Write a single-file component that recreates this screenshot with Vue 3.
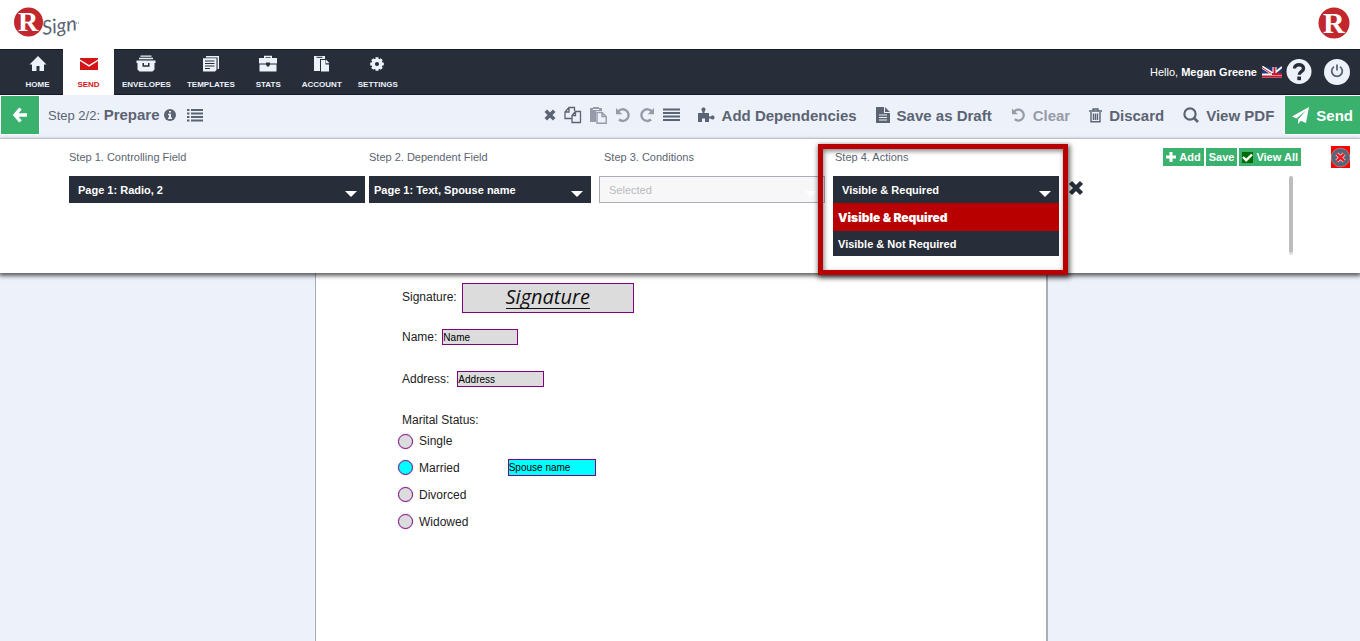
<script setup>
import { ref } from 'vue'

const nav = ['HOME', 'SEND', 'ENVELOPES', 'TEMPLATES', 'STATS', 'ACCOUNT', 'SETTINGS']
const active = ref('SEND')
const controlling = ref('Page 1: Radio, 2')
const dependent = ref('Page 1: Text, Spouse name')
const actions = ['Visible & Required', 'Visible & Not Required']
const action = ref(actions[0])
const marital = ref('Married')
const statuses = ['Single', 'Married', 'Divorced', 'Widowed']
</script>

<template>
  <div class="page">
    <header class="brand">
      <a href="#" class="logo" aria-label="RSign">
        <svg width="68" height="38" viewBox="0 0 68 38">
          <circle cx="14.500" cy="15" r="14.500" fill="#c1272d" />
          <text x="4" y="24" class="mono-r" font-size="28">R</text>
          <text x="29" y="28" class="script" transform="rotate(-8 29 28)">Sign</text>
          <path d="M62 16h1M64 16h1" stroke="#5b6472" />
        </svg>
      </a>
      <svg width="32" height="32" viewBox="0 0 32 32">
        <circle cx="16" cy="16" r="15.500" fill="#c1272d" />
        <text x="5" y="26" class="mono-r" font-size="30">R</text>
      </svg>
    </header>

    <nav class="nav">
      <a v-for="n in nav" :key="n" href="#" class="nav-item" :class="{ on: n === active }" @click.prevent="active = n">
        <svg width="20" height="18" viewBox="0 0 20 18" fill="currentColor">
          <path v-if="n === 'HOME'" d="M10 1L18.500 9.500H16V16h-4.500v-5h-3v5H4V9.500H1.500z" />
          <g v-else-if="n === 'SEND'">
            <path d="M1 3h18v1.500L10 10 1 4.500z" />
            <path d="M1 6l9 5.800L19 6V15H1z" />
          </g>
          <g v-else-if="n === 'ENVELOPES'">
            <path d="M4.500 .5h11v1.300h-11zM3 2.800h14v1.500H3z" />
            <path fill-rule="evenodd" d="M.5 5.500h19V8h-1v6.500l-2 2h-13l-2-2V8h-1zM6.500 8v3.800h7V8H12v2.300H8V8z" />
          </g>
          <g v-else-if="n === 'TEMPLATES'">
            <path d="M5 1h13v13h-1.400V2.400H5z" />
            <path fill-rule="evenodd" d="M2 3.200h13.500V15L14 16.500H2zM4 5.500v1h9.500v-1zM4 8v1h9.500V8zM4 10.500v1h9.500v-1zM4 13v1h5v-1z" />
          </g>
          <g v-else-if="n === 'STATS'">
            <path fill-rule="evenodd" d="M6 3V.8h8V3h5v5.500h-7v-1H8v1H1V3zM7.500 2.200V3h5v-.8z" />
            <path d="M1.500 9.500H8l1 2h2l1-2h6.500v7h-17z" />
          </g>
          <g v-else-if="n === 'ACCOUNT'">
            <path d="M2 1h11v3H8v12H2z" />
            <path d="M4.500 2.300h6" stroke="#272e39" />
            <path d="M9 5h4.500v4.500H17V16.500H9z" />
            <path d="M14 4.500l3.500 3.800H14z" />
          </g>
          <g v-else transform="translate(-1 0)">
            <circle cx="10" cy="9" r="3.800" fill="none" stroke="currentColor" stroke-width="3.400" />
            <path d="M10 2.200V5M10 13v2.800M3.200 9H6M14 9h2.800M5.200 4.200l1.900 1.900M12.900 11.900l1.900 1.900M5.200 13.800l1.900-1.900M12.900 6.100l1.900-1.900" stroke="currentColor" stroke-width="3" />
          </g>
        </svg>
        <span>{{ n }}</span>
      </a>
      <div class="user">
        <span>Hello, <b>Megan Greene</b></span>
        <svg class="flag" width="20" height="13" viewBox="0 0 20 13">
          <path fill="#1d3a78" d="M0 1h20v11H0z" />
          <path d="M0 1l11 7" stroke="#fff" stroke-width="3" />
          <path d="M20 1l-6 5" stroke="#fff" stroke-width="2" />
          <path d="M0 1.500l10 6.500" stroke="#d0142c" />
          <path d="M12.500 1v8M0 9.500h20" stroke="#fff" stroke-width="4" />
          <path d="M12.500 1v8" stroke="#d0142c" stroke-width="2" />
          <path d="M10 8h10" stroke="#d0142c" stroke-width="2" />
          <path d="M0 10.500h20" stroke="#d0142c" stroke-width="2" />
        </svg>
        <a href="#" class="round" aria-label="Help">
          <svg width="26" height="26" viewBox="0 0 26 26"><circle cx="13" cy="12.500" r="12.500" fill="#edf1fa" /><path d="M8.500 9.500c0-5 9-5 9 0 0 3.200-4.300 3-4.300 6.200" fill="none" stroke="#272e39" stroke-width="3.400" /><path d="M11.300 17.500h3.700v3.700h-3.700z" fill="#272e39" /></svg>
        </a>
        <a href="#" class="round power" aria-label="Log out">
          <svg width="26" height="26" viewBox="0 0 26 26"><circle cx="13" cy="13" r="13" fill="#edf1fa" /><path d="M10 7.700a5.300 5.300 0 1 0 6 0M13 5.500v6" fill="none" stroke="#5b6472" stroke-width="1.800" /></svg>
        </a>
      </div>
    </nav>

    <div class="toolbar">
      <button class="green back" aria-label="Back">
        <svg width="14" height="16" viewBox="0 0 14 16"><path d="M7.500 1.500L2 8l5.500 6.500M2.500 8H14" fill="none" stroke="#fff" stroke-width="3.400" /></svg>
      </button>
      <h1>Step 2/2: <b>Prepare</b></h1>
      <svg class="info" width="12" height="12" viewBox="0 0 12 12"><circle cx="6" cy="6" r="6" fill="#5b6472" /><path d="M5 2h2v1.600H5zM4 4.800h3v3.600h1V10H4V8.400h1V6.200H4z" fill="#edf1fa" /></svg>
      <button class="icon" aria-label="Steps">
        <svg width="16" height="14" viewBox="0 0 16 14"><path d="M0 2h2.500M4 2h12M0 5.500h2.500M4 5.500h12M0 9h2.500M4 9h12M0 12.500h2.500M4 12.500h12" stroke="#5b6472" stroke-width="2" /></svg>
      </button>

      <div class="edit">
        <button class="icon" aria-label="Delete"><svg width="12" height="12" viewBox="0 0 12 12"><path d="M1.800 1.800l8.400 8.400M10.200 1.800l-8.400 8.400" stroke="#5b6472" stroke-width="3.600" /></svg></button>
        <button class="icon" aria-label="Copy"><svg width="18" height="18" viewBox="0 0 18 18"><g fill="none" stroke="#5b6472" stroke-width="1.300"><path d="M8 12.500H1V6l4-4.500h5.500V5M5 1.500V6H1" /><path d="M8 9.500L11.500 5.500h5v11H8zM11.500 5.500v4H8" /></g></svg></button>
        <button class="icon dim" aria-label="Paste"><svg width="17" height="17" viewBox="0 0 17 17"><path d="M0 1h3V0h6v1h3v3H6v11H0z" fill="#5b6472" /><path d="M3 2.500h6" stroke="#edf1fa" /><path d="M7 5.500h5l4.200 4v6.800H7zM12 5.500v4h4" fill="none" stroke="#5b6472" stroke-width="1.400" /></svg></button>
        <button class="icon dim" aria-label="Undo"><svg width="16" height="16" viewBox="0 0 16 16"><path d="M3.200 4.600A5.800 5.800 0 1 1 4 12.500" fill="none" stroke="#5b6472" stroke-width="2.400" /><path d="M1 1v6.300h6.300z" fill="#5b6472" /></svg></button>
        <button class="icon dim" aria-label="Redo"><svg width="16" height="16" viewBox="0 0 16 16"><path d="M12.800 4.600A5.800 5.800 0 1 0 12 12.500" fill="none" stroke="#5b6472" stroke-width="2.400" /><path d="M15 1v6.300H8.700z" fill="#5b6472" /></svg></button>
        <button class="icon" aria-label="Align"><svg width="17" height="14" viewBox="0 0 17 14"><path d="M0 1.500h17M0 5h17M0 8.500h17M0 12h17" stroke="#5b6472" stroke-width="2" /></svg></button>
      </div>

      <button class="act"><svg width="18" height="16" viewBox="0 0 18 16"><path d="M1 6h4.500C6 4.500 4.500 4 4.500 2.500S5.500.5 6.500.5 8.500 1 8.500 2.500 7 4.500 7.500 6H12v3.500h2C14.500 8 17.500 8 17.500 10.500S14.500 13 14 11.500h-2V15H8v-3.500H5V15H1z" fill="#5b6472" /></svg>Add Dependencies</button>
      <button class="act"><svg width="14" height="16" viewBox="0 0 14 16"><path d="M0 0h8v6h6v10H0zM9 0l5 5H9z" fill="#5b6472" /><path d="M3 8h8M3 10.500h8M3 13h8" stroke="#edf1fa" stroke-width="1.200" /></svg>Save as Draft</button>
      <button class="act dim"><svg width="15" height="16" viewBox="0 0 16 16"><path d="M3.200 4.600A5.800 5.800 0 1 1 4 12.500" fill="none" stroke="#5b6472" stroke-width="2.400" /><path d="M1 1v6.300h6.300z" fill="#5b6472" /></svg>Clear</button>
      <button class="act"><svg width="13" height="15" viewBox="0 0 13 15"><path d="M0 3h13M4.200 3V1h4.600v2" fill="none" stroke="#5b6472" stroke-width="1.700" /><path d="M2 4v9.800h9V4M4.500 5.500V12M6.500 5.500V12M8.500 5.500V12" fill="none" stroke="#5b6472" stroke-width="1.400" /></svg>Discard</button>
      <button class="act"><svg width="16" height="16" viewBox="0 0 16 16"><circle cx="7" cy="7" r="5.600" fill="none" stroke="#5b6472" stroke-width="2.200" /><path d="M11 11l4 4" stroke="#5b6472" stroke-width="2.600" /></svg>View PDF</button>
      <button class="green send"><svg width="17" height="17" viewBox="0 0 17 17"><path d="M17 0L0 9.500l4.500 2L14 3.500 6 12.500V17l2.800-3.200L14 16z" fill="#fff" /></svg>Send</button>
    </div>

    <section class="panel">
      <div class="steps">
        <div class="step">
          <label for="s1">Step 1. Controlling Field</label>
          <div class="pick">
            <select id="s1" v-model="controlling"><option>Page 1: Radio, 2</option></select>
            <svg class="caret" width="12" height="6" viewBox="0 0 12 6"><path d="M0 0h12L6 6z" /></svg>
          </div>
        </div>
        <div class="step second">
          <label for="s2">Step 2. Dependent Field</label>
          <div class="pick">
            <select id="s2" v-model="dependent"><option>Page 1: Text, Spouse name</option></select>
            <svg class="caret" width="12" height="6" viewBox="0 0 12 6"><path d="M0 0h12L6 6z" /></svg>
          </div>
        </div>
        <div class="step third">
          <label for="s3">Step 3. Conditions</label>
          <div class="pick">
            <select id="s3" disabled><option>Selected</option></select>
            <svg class="caret" width="12" height="6" viewBox="0 0 12 6"><path d="M0 0h12L6 6z" /></svg>
          </div>
        </div>
        <div class="step fourth">
          <label for="s4">Step 4. Actions</label>
          <div class="pick">
            <select id="s4" v-model="action"><option v-for="a in actions" :key="a">{{ a }}</option></select>
            <svg class="caret" width="12" height="6" viewBox="0 0 12 6"><path d="M0 0h12L6 6z" /></svg>
          </div>
          <ul class="list">
            <li v-for="a in actions" :key="a"><button :class="{ hot: a === action }" @click="action = a">{{ a }}</button></li>
          </ul>
          <div class="callout"></div>
        </div>
      </div>
      <button class="icon remove" aria-label="Remove step"><svg width="16" height="16" viewBox="0 0 16 16"><path d="M2.500 2.500l11 11M13.500 2.500l-11 11" stroke="#272e39" stroke-width="4.400" /></svg></button>
      <div class="side">
        <div class="buttons">
          <button class="green"><svg width="10" height="10" viewBox="0 0 10 10"><path d="M5 0v10M0 5h10" stroke="#fff" stroke-width="3" /></svg>Add</button>
          <button class="green">Save</button>
          <button class="green"><svg width="11" height="11" viewBox="0 0 11 11"><path fill="#006b00" d="M0 0h11v11H0z" /><path d="M1 5l3.200 3.200L10 2.500" fill="none" stroke="#fff" stroke-width="2.400" /></svg>View All</button>
        </div>
        <div class="track"></div>
      </div>
      <button class="icon close" aria-label="Close"><svg width="19" height="22" viewBox="0 0 19 22"><path fill="#f00" d="M0 0h19v22H0z" /><circle cx="9.500" cy="11.500" r="9.300" fill="#5b6472" stroke="#aab" stroke-width=".6" /><path d="M5.800 7.800l7.400 7.400M13.200 7.800l-7.400 7.400" stroke="#dde" stroke-width="4" /><path d="M5.800 7.800l7.400 7.400M13.200 7.800l-7.400 7.400" stroke="#f01820" stroke-width="2.600" /></svg></button>
    </section>

    <main class="canvas">
      <form class="doc" @submit.prevent>
        <div class="row sign-row">
          <span>Signature:</span>
          <button type="button" class="signature" aria-label="Signature field"><span>Signature</span></button>
        </div>
        <div class="row">
          <label for="name">Name:</label>
          <input id="name" class="field name" value="Name" readonly />
        </div>
        <div class="row address-row">
          <label for="address">Address:</label>
          <input id="address" class="field address" value="Address" readonly />
        </div>
        <fieldset>
          <legend>Marital Status:</legend>
          <div v-for="s in statuses" :key="s" class="status">
            <input :id="s" v-model="marital" type="radio" name="marital" :value="s" />
            <label :for="s">{{ s }}</label>
            <input v-if="s === 'Married'" class="field spouse" value="Spouse name" aria-label="Spouse name" readonly />
          </div>
        </fieldset>
      </form>
    </main>
  </div>
</template>

<style>
body { margin: 0; }
</style>

<style scoped>
* { box-sizing: border-box; }
.page { min-height: 100vh; display: flex; flex-direction: column; overflow: hidden; background: #edf1fa; font-family: "Liberation Sans", Arial, sans-serif; color: #5b6472; }
button { font-family: inherit; border: 0; cursor: pointer; }
svg { display: block; flex: none; }
a { text-decoration: none; }
.brand { height: 49px; padding: 7px 10px 0 14px; display: flex; justify-content: space-between; background: #fff; }
.mono-r { font-family: "Liberation Serif", serif; font-weight: bold; fill: #fff; }
.script { font: italic 20px Lato, sans-serif; fill: #5b6472; }

.nav { height: 46px; padding-left: 12px; display: flex; background: #272e39; border-top: 1px solid #151b26; border-bottom: 1px solid #151b26; }
.nav-item { min-width: 51px; margin: -1px 0; padding: 6px 8px 0; display: flex; flex-direction: column; align-items: center; gap: 7px; color: #edf1fa; font-size: 8px; line-height: 10px; font-weight: bold; }
.nav-item.on { background: #fff; color: #d41515; }
.user { margin-left: auto; padding-right: 10px; display: flex; align-items: center; color: #fff; font-size: 11px; }
.flag { margin: 0 4px 0 5px; }
.power { margin-left: 12px; }

.toolbar { height: 44px; display: flex; align-items: center; padding: 0 0 3px 1px; border-bottom: 1px solid #dcdfec; }
.green { background: #3bb16e; color: #fff; font-weight: bold; }
.back { width: 38px; height: 38px; padding: 0; display: flex; align-items: center; justify-content: center; box-shadow: 0 0 0 1px #fff; }
h1 { margin: 0 0 0 9px; font-size: 13px; font-weight: normal; line-height: 18px; }
h1 b { font-size: 15px; }
.info { margin: 0 11px 0 4px; }
.icon { padding: 0; background: none; }
.dim { opacity: .6; }
.edit { margin-left: auto; margin-right: 17px; display: flex; align-items: center; gap: 8px; }
.act { padding: 0; margin-right: 19px; display: flex; align-items: center; gap: 7px; background: none; color: #5b6472; font-size: 15px; font-weight: bold; white-space: nowrap; }
.send { height: 38px; margin-left: -8px; padding: 0 7px; display: flex; align-items: center; gap: 7px; font-size: 15px; box-shadow: 0 0 0 1px #fff; }

.panel { position: relative; z-index: 1; min-height: 134px; padding: 7px 10px 0 69px; display: flex; background: #fff; box-shadow: 0 2px 4px 1px rgba(0, 0, 0, .6); font-size: 11px; }
.steps { flex: 1; display: grid; grid-template-columns: 300fr 230fr 234fr 226fr; }
.step { padding-right: 4px; min-width: 0; }
.step > label { display: block; height: 30px; line-height: 22px; }
.second, .third { padding-right: 8px; }
.third > label { padding-left: 5px; }
.fourth { position: relative; padding-right: 0; }
.fourth > label { padding-left: 2px; }
.pick { position: relative; }
select { display: block; width: 100%; height: 27px; padding: 0 24px 0 9px; appearance: none; border: 0; border-radius: 0; background: #272e39; color: #fff; font: bold 11px "Liberation Sans", Arial, sans-serif; }
.second select { padding-left: 5px; }
select:disabled { opacity: 1; border: 1px solid #a8acb3; background: #f7f7f7; color: #b8bbc0; font-weight: normal; }
.caret { position: absolute; right: 8px; bottom: 6px; fill: #fff; pointer-events: none; }
.list { margin: 0; padding: 0; list-style: none; }
.list button { display: block; width: 100%; height: 25px; padding: 0 5px; text-align: left; background: #272e39; color: #fff; font-size: 11px; font-weight: bold; }
.list button.hot { height: 28px; background: #b90000; font-family: Inter, sans-serif; font-size: 12px; font-weight: 900; }
.callout { position: absolute; left: -15px; right: -9px; top: -2px; height: 131px; border: 5px solid #b90000; box-shadow: 1px 2px 5px 1px rgba(0, 0, 0, .6), inset 1px 2px 5px rgba(0, 0, 0, .5); pointer-events: none; }
.remove { align-self: flex-start; margin: 34px 0 0 9px; }
.side { width: 217px; padding: 2px 0 0; display: flex; flex-direction: column; align-items: flex-end; }
.buttons { display: flex; gap: 2px; }
.buttons button { height: 18px; padding: 0 3px; display: flex; align-items: center; gap: 3px; font-size: 11px; white-space: nowrap; }
.track { width: 4px; height: 79px; margin: 10px 8px 0 0; background: #bdbdbd; border-radius: 2px; border-bottom: 3px solid #ddd; }
.close { margin-left: 30px; align-self: flex-start; }

.canvas { flex: 1; display: flex; justify-content: center; padding-left: 3px; }
.doc { width: 733px; padding: 10px 0 20px 86px; background: #fff; border: solid #a9adb5; border-width: 0 2px 0 1px; color: #222; font-size: 12px; }
.row { display: flex; align-items: center; gap: 5px; height: 16px; margin-bottom: 26px; }
.sign-row { height: 30px; margin-bottom: 16px; }
.sign-row > span { padding-bottom: 3px; }
.address-row { gap: 8px; margin-bottom: 25px; }
.signature { width: 172px; height: 30px; padding: 0 0 2px; background: #dcdcdc; border: 1px solid #800080; color: #111; font: italic 20px "Open Sans", sans-serif; line-height: 22px; }
.signature span { display: inline-block; border-bottom: 1px solid #111; }
.field { height: 16px; padding: 0; border: 1px solid #800080; border-radius: 0; background: #dcdcdc; color: #000; font: 10px "Liberation Sans", Arial, sans-serif; }
.name { width: 76px; }
.address { width: 87px; }
fieldset { min-width: 0; margin: 0 0 0 -4px; padding: 0; border: 0; }
legend { padding: 0 0 0 4px; line-height: 16px; }
.status { height: 27px; display: flex; align-items: center; gap: 6px; }
.status:first-of-type { height: 26px; }
.status input[type="radio"] { width: 15px; height: 15px; margin: 0; appearance: none; border: 1px solid #800080; border-radius: 50%; background: #dcdcdc; box-shadow: 0 0 0 1px #eef0f6; }
.status input[type="radio"]:checked { background: #0ff; }
.status .spouse { width: 88px; height: 17px; margin-left: 42px; background: #0ff; }
</style>
